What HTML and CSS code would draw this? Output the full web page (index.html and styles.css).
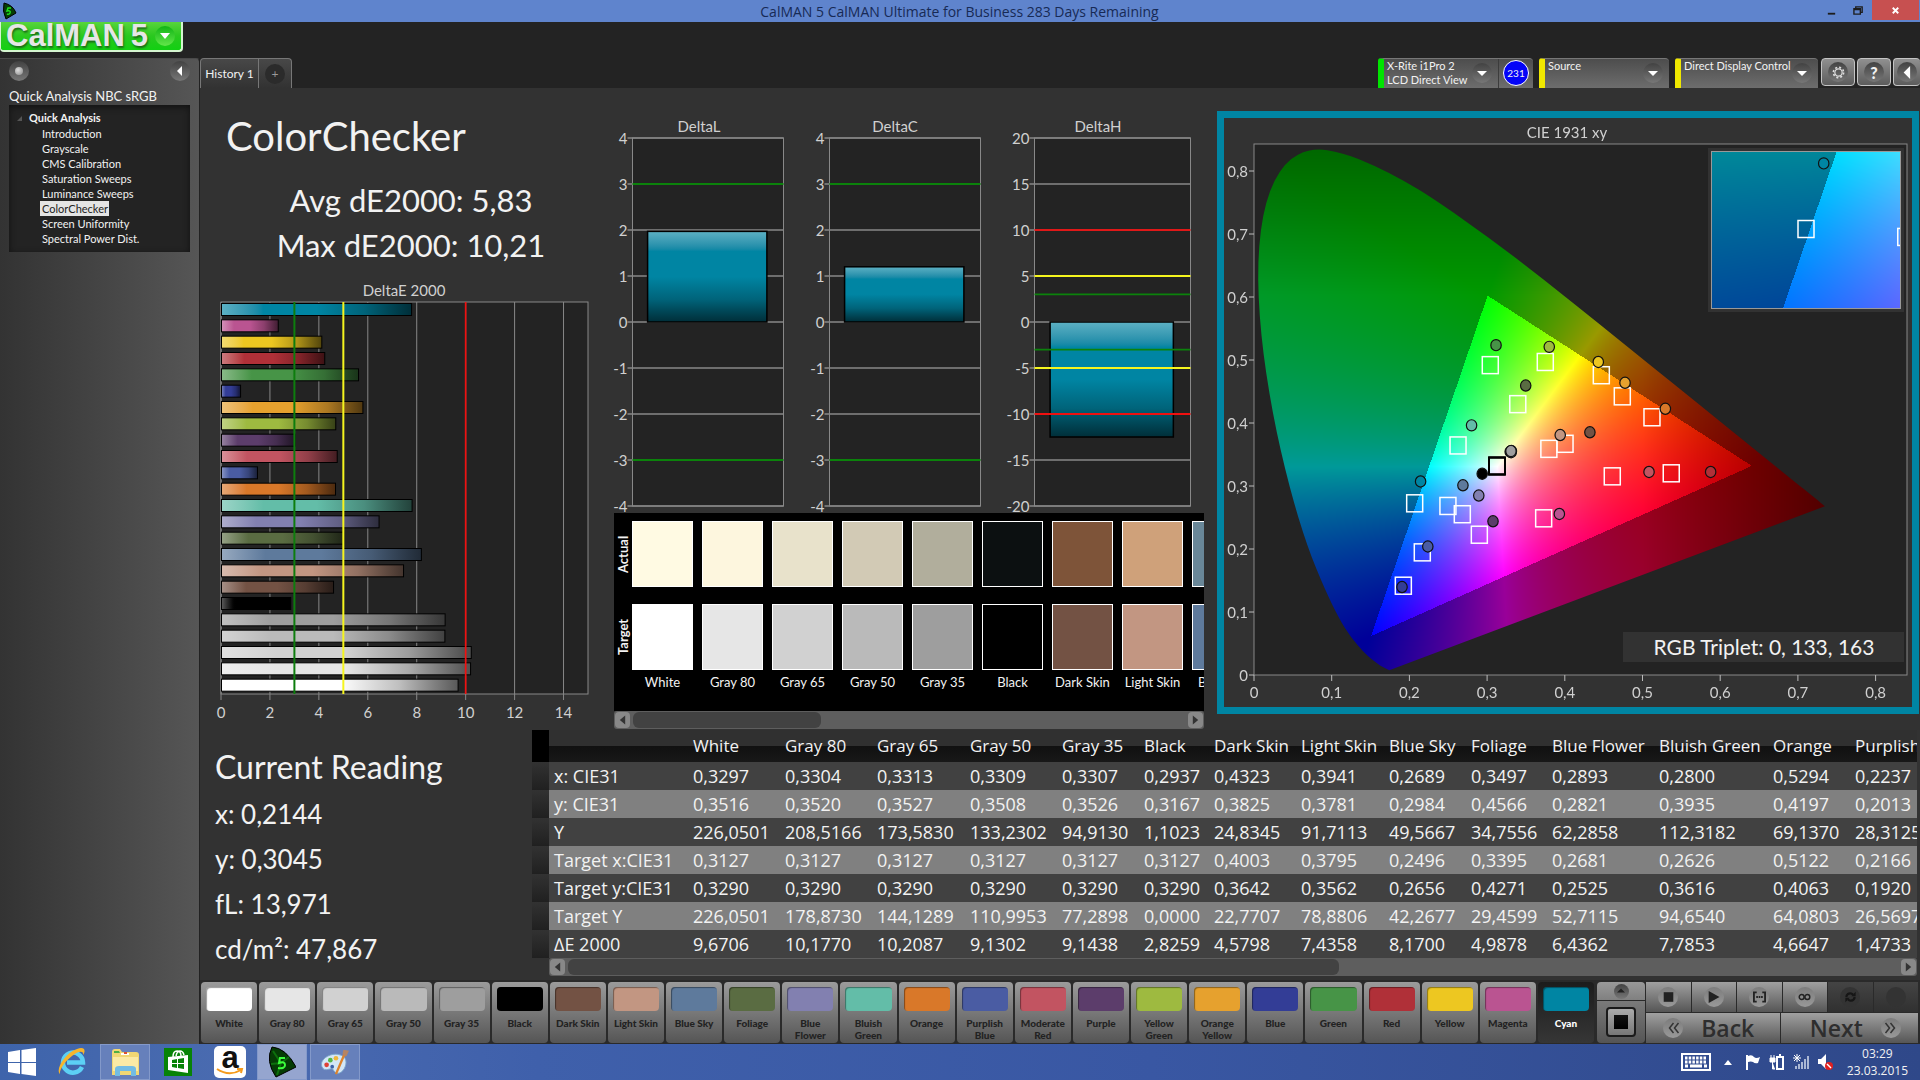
FILE: index.html
```html
<!DOCTYPE html>
<html lang="en">
<head>
  <meta charset="UTF-8" />
  <meta name="viewport" content="width=device-width, initial-scale=1.0" />
  <title>CalMAN 5 CalMAN Ultimate for Business</title>
  <link rel="stylesheet" href="styles.css">
</head>
<body>
  <!-- Window title bar -->
  <header class="titlebar">
    <svg class="app-icon" viewBox="0 0 16 18"><path d="M3 1 Q12 3 15 11 L5 17 Q1 9 3 1Z" fill="#063d06" stroke="#000"/><path d="M10 6H7L6 9Q10 8 9 11Q8 13 6 12" fill="none" stroke="#1de21d" stroke-width="1.5"/></svg>
    <h1 class="window-title">CalMAN 5 CalMAN Ultimate for Business 283 Days Remaining</h1>
    <div class="window-buttons">
      <button aria-label="Minimize"><svg viewBox="0 0 12 12"><path d="M2 9.500h8" stroke="#1d1d1d" stroke-width="2"/></svg></button>
      <button aria-label="Restore"><svg viewBox="0 0 12 12"><path d="M1 4h7v6H1zM3 4V2h7v6H8M1 5h7" fill="none" stroke="#1d1d1d" stroke-width="1.500"/></svg></button>
      <button class="close" aria-label="Close"><svg viewBox="0 0 12 12"><path d="M3 3l6 6M9 3l-6 6" stroke="#fff" stroke-width="2"/></svg></button>
    </div>
  </header>

  <div class="brand-row">
    <button class="brand"><span>CalMAN</span><span>5</span><i class="round green"><svg viewBox="0 0 10 10"><path d="M0 2h10L5 8z" fill="#fff"/></svg></i></button>
  </div>

  <div class="app">
    <!-- Workflow sidebar -->
    <aside class="sidebar">
      <div class="sidebar-top">
        <button class="round" aria-label="Record"><i class="dot"></i></button>
        <button class="round" aria-label="Collapse"><svg viewBox="0 0 10 10"><path d="M7 0v10L2 5z" fill="#fff"/></svg></button>
      </div>
      <h2>Quick Analysis NBC sRGB</h2>
      <nav class="tree">
        <strong>Quick Analysis</strong>
        <a href="#">Introduction</a>
        <a href="#">Grayscale</a>
        <a href="#">CMS Calibration</a>
        <a href="#">Saturation Sweeps</a>
        <a href="#">Luminance Sweeps</a>
        <a href="#" class="current">ColorChecker</a>
        <a href="#">Screen Uniformity</a>
        <a href="#">Spectral Power Dist.</a>
      </nav>
    </aside>

    <main class="main">
      <!-- Tabs and devices -->
      <div class="tab-row">
        <div class="tabs">
          <button class="tab">History 1</button>
          <button class="tab add" aria-label="Add history"><i>+</i></button>
        </div>
        <div class="devices">
          <div class="device meter">
            <button class="device-name">X-Rite i1Pro 2<br>LCD Direct View<i class="round"><svg viewBox="0 0 10 10"><path d="M0 3h10L5 8z" fill="#fff"/></svg></i></button>
            <button class="count"><i>231</i></button>
          </div>
          <div class="device source">
            <button class="device-name">Source<i class="round"><svg viewBox="0 0 10 10"><path d="M0 3h10L5 8z" fill="#fff"/></svg></i></button>
          </div>
          <div class="device display">
            <button class="device-name">Direct Display Control<i class="round"><svg viewBox="0 0 10 10"><path d="M0 3h10L5 8z" fill="#fff"/></svg></i></button>
          </div>
          <button class="tool" aria-label="Settings"><i class="round"><svg viewBox="0 0 16 16"><circle cx="8" cy="8" r="4.500" fill="none" stroke="#ddd" stroke-width="1.500"/><circle cx="8" cy="8" r="6.300" fill="none" stroke="#ddd" stroke-width="2" stroke-dasharray="2.500 2.450"/></svg></i></button>
          <button class="tool" aria-label="Help"><i class="round">?</i></button>
          <button class="tool" aria-label="Hide"><i class="round"><svg viewBox="0 0 10 10"><path d="M7 0v10L2 5z" fill="#fff"/></svg></i></button>
        </div>
      </div>

      <div class="workspace">
        <div class="upper">
          <section class="summary">
            <h2>ColorChecker</h2>
            <p>Avg dE2000: 5,83</p>
            <p>Max dE2000: 10,21</p>
            <svg id="delta-e" class="chart" viewBox="0 0 414 450"></svg>
          </section>

          <section class="middle">
            <svg id="deltas" class="chart" viewBox="0 0 590 400"></svg>
            <div class="patches">
              <div class="patch-sides"><span>Actual</span><span>Target</span></div>
              <div class="patch-list" id="patch-list"></div>
            </div>
            <div class="scrollbar">
              <button aria-label="Scroll left"><svg viewBox="0 0 10 10"><path d="M8 0v10L2 5z"/></svg></button>
              <div class="track"><div class="thumb short"></div></div>
              <button aria-label="Scroll right"><svg viewBox="0 0 10 10"><path d="M2 0v10L8 5z"/></svg></button>
            </div>
          </section>

          <section class="cie">
            <canvas id="cie-fill" width="688" height="589"></canvas>
            <svg id="cie-chart" class="chart" viewBox="0 0 688 589"></svg>
          </section>
        </div>

        <div class="lower">
          <section class="reading">
            <h2>Current Reading</h2>
            <p>x: 0,2144</p>
            <p>y: 0,3045</p>
            <p>fL: 13,971</p>
            <p>cd/m²: 47,867</p>
          </section>
          <section class="results">
            <div class="table-wrap"><table id="results"></table></div>
            <div class="scrollbar">
              <button aria-label="Scroll left"><svg viewBox="0 0 10 10"><path d="M8 0v10L2 5z"/></svg></button>
              <div class="track"><div class="thumb long"></div></div>
              <button aria-label="Scroll right"><svg viewBox="0 0 10 10"><path d="M2 0v10L8 5z"/></svg></button>
            </div>
          </section>
        </div>
      </div>

      <!-- Pattern buttons and transport -->
      <div class="bottom-bar">
        <div class="pattern-buttons" id="pattern-buttons"></div>
        <div class="pattern-control">
          <button aria-label="Up"><i class="round"><svg viewBox="0 0 10 10"><path d="M0 7h10L5 2z" fill="#222"/></svg></i></button>
          <button aria-label="Pattern window"><i class="pattern-window"></i></button>
        </div>
        <div class="transport">
          <div class="transport-row">
            <button aria-label="Stop"><i class="round"><svg viewBox="0 0 10 10"><path d="M1 1h8v8H1z"/></svg></i></button>
            <button aria-label="Play"><i class="round"><svg viewBox="0 0 10 10"><path d="M1 0l9 5-9 5z"/></svg></i></button>
            <button aria-label="Read series"><i class="round"><svg viewBox="0 0 14 12"><path d="M4 1H1v10h3M10 1h3v10h-3" fill="none" stroke="#222" stroke-width="2"/><path d="M3.500 6h7" stroke="#222" stroke-width="2" stroke-dasharray="1.800 .8"/></svg></i></button>
            <button aria-label="Continuous"><i class="round"><svg viewBox="0 0 16 10"><circle cx="4.500" cy="5" r="3" fill="none" stroke="#222" stroke-width="1.800"/><circle cx="11.500" cy="5" r="3" fill="none" stroke="#222" stroke-width="1.800"/></svg></i></button>
            <button class="off" aria-label="Refresh"><i class="round"><svg viewBox="0 0 14 14"><path d="M2 7Q3 2 8 3L10 4M12 7Q11 12 6 11L4 10" fill="none" stroke="#161616" stroke-width="2.500"/><path d="M8 6h5V1zM6 8H1v5z" fill="#161616"/></svg></i></button>
            <button class="off" aria-label="Blank"><i class="round"></i></button>
          </div>
          <div class="transport-row">
            <button class="nav-btn back"><i class="round"><svg viewBox="0 0 12 12"><path d="M6 1L2 6l4 5M11 1L7 6l4 5" fill="none" stroke="#333" stroke-width="1.500"/></svg></i>Back</button>
            <button class="nav-btn next">Next<i class="round"><svg viewBox="0 0 12 12"><path d="M1 1l4 5-4 5M6 1l4 5-4 5" fill="none" stroke="#333" stroke-width="1.500"/></svg></i></button>
          </div>
        </div>
      </div>
    </main>
  </div>

  <!-- Taskbar -->
  <footer class="taskbar">
    <button aria-label="Start"><svg viewBox="0 0 28 28"><path d="M0 4l12-2v12H0zM13.500 2L28 0v14H13.500zM0 15h12v11L0 24zM13.500 15H28v13l-14.500-2z" fill="#fff"/></svg></button>
    <button aria-label="Internet Explorer"><svg viewBox="0 0 28 28"><path d="M24 19A10 10 0 1 1 25 14.500H9" fill="none" stroke="#5cd0f5" stroke-width="4.500"/><path d="M2 26C-3 22 7 5 19 1c8-3 9 2 6 6 1-5-5-4-11 1C6 14 1 23 2 26z" fill="#f6b52c"/></svg></button>
    <button class="open" aria-label="File Explorer"><svg viewBox="0 0 28 28"><path d="M1 4q0-3 3-3h5l2 3h14q3 0 3 3v20H1z" fill="#f1d774"/><path d="M3 3h5l1 2H3z" fill="#4fae45"/><path d="M10 5h8v2h-8z" fill="#fff"/><path d="M13 4h3v2h-3z" fill="#dc4f32"/><path d="M2 9h25v14H2z" fill="#fbeaa5"/><path d="M4 28v-7q0-3 4-3h13q4 0 4 3v7h-5v-5H9v5z" fill="#72bce4"/></svg></button>
    <button aria-label="Store"><svg viewBox="0 0 28 28"><path d="M0 0h28v28H0z" fill="#078307"/><path d="M4 9l20-2v18L4 22z" fill="#fff"/><path d="M9 9q0-6 4-6t4 5M12 8q1-5 4-5t4 4" fill="none" stroke="#fff" stroke-width="1.500"/><path d="M8 12l5-1v4H8zM14 11l6-1v5h-6zM8 16h5v4l-5-1zM14 16h6v5l-6-1z" fill="#078307"/></svg></button>
    <button class="amazon" aria-label="Amazon"><span>a</span><svg viewBox="0 0 28 8"><path d="M1 1q12 8 24 1M21 1l5-0-1 4" fill="none" stroke="#f59b1c" stroke-width="2"/></svg></button>
    <button class="open active" aria-label="CalMAN"><svg viewBox="0 0 28 32"><path d="M4 1Q18 2 28 21L8 31Q-3 15 4 1z" fill="#053c05" stroke="#000"/><path d="M13 17L5 5M13 17l8-6M13 17L9 29M13 17L3 18" stroke="#0c700c" stroke-width="2"/><path d="M17 12h-5l-1 5q6-2 6 2t-7 3" fill="none" stroke="#3cff3c" stroke-width="2"/></svg></button>
    <button class="open" aria-label="Paint"><svg viewBox="0 0 30 28"><path d="M1 19C-2 11 10 4 19 6c9 2 9 9 6 15-4 7-10 6-12 1-2-3-9 4-12-3z" fill="#d3e7f6" stroke="#7da7cc"/><circle cx="6" cy="17" r="2.500" fill="#df4235"/><circle cx="10" cy="12" r="2.500" fill="#56b843"/><circle cx="16" cy="10" r="2.500" fill="#f0b73a"/><circle cx="12" cy="19" r="2" fill="#3c62a9"/><path d="M16 27L25 6" stroke="#dd832c" stroke-width="2.500"/><path d="M23 6l1-5 6 1-3 6z" fill="#b58463"/></svg></button>
    <div class="tray">
      <svg class="keyboard" viewBox="0 0 30 18"><path d="M1 1h28v16H1z" fill="none" stroke="#fff" stroke-width="2"/><path d="M4 5h22M4 9h22" stroke="#fff" stroke-width="3" stroke-dasharray="2.500 1.200"/><path d="M4 13h3M9 13h12M23 13h3" stroke="#fff" stroke-width="3"/></svg>
      <svg class="up" viewBox="0 0 10 10"><path d="M1 8h8L5 3z" fill="#fff"/></svg>
      <svg viewBox="0 0 16 16"><path d="M2 1v15" stroke="#fff" stroke-width="2"/><path d="M3 2q4-2 6 1 2 2 6 0l-2 6q-3 1-5-1-2-1-5 0z" fill="#fff"/></svg>
      <svg viewBox="0 0 16 16"><path d="M8 3h6v12H8zM10 1h2" fill="none" stroke="#fff" stroke-width="2"/><path d="M1 4h5v4H1zM2 1v3M5 1v3M3.500 8v7H6" fill="#fff" stroke="#fff"/></svg>
      <svg viewBox="0 0 16 16"><path d="M3 15v-3M6 15v-5M9 15V8M12 15V5M15 15V2" stroke="#aab7d4" stroke-width="2"/><path d="M4 0v8M0 4h8M1 1l6 6M7 1L1 7" stroke="#fff"/></svg>
      <svg viewBox="0 0 16 16"><path d="M1 5h3l5-5v15l-5-5H1z" fill="#fff"/><circle cx="12" cy="12" r="4" fill="#e02020"/><path d="M10 10l4 4" stroke="#fff" stroke-width="1.500"/></svg>
      <div class="clock">03:29<br>23.03.2015</div>
    </div>
  </footer>

  <script src="script.js"></script>
</body>
</html>
```
FILE: styles.css
```css
* {
  margin: 0;
  padding: 0;
  box-sizing: border-box;
}
body {
  min-height: 100vh;
  display: flex;
  flex-direction: column;
  background: #232323;
  color: #f2f2f2;
  font-family: Lato, "Liberation Sans", sans-serif;
  font-size: 12px;
  overflow-x: hidden;
}
button {
  border: none;
  background: none;
  color: inherit;
  font: inherit;
  cursor: pointer;
}
i {
  font-style: normal;
}
svg {
  display: block;
}

/* Title bar */
.titlebar {
  display: flex;
  align-items: center;
  height: 22px;
  background: #5f84cd;
  color: #172a55;
}
.app-icon {
  width: 16px;
  height: 18px;
  margin-left: 1px;
}
.window-title {
  flex: 1;
  padding-left: 84px;
  text-align: center;
  font: 14px "Open Sans", sans-serif;
}
.window-buttons {
  display: flex;
  align-self: flex-start;
}
.window-buttons button {
  display: flex;
  align-items: center;
  justify-content: center;
  width: 27px;
  height: 20px;
}
.window-buttons svg {
  width: 11px;
  height: 11px;
}
.window-buttons .close {
  width: 47px;
  margin-right: 1px;
  background: #c75050;
}

/* Brand button */
.brand-row {
  height: 36px;
}
.brand {
  display: flex;
  align-items: center;
  gap: 6px;
  width: 183px;
  height: 30px;
  padding-left: 5px;
  border: 2px solid #d5f5d0;
  border-top: none;
  border-left-width: 1px;
  border-radius: 0 0 4px 4px;
  background: linear-gradient(#58d53c, #2ac81f 50%, #12d012);
  color: #e6e6e6;
  font: bold 31px/26px "Liberation Sans", sans-serif;
  text-shadow: 1px 2px 2px #1c6d18;
}

/* Small round icon holders */
.round {
  display: flex;
  align-items: center;
  justify-content: center;
  flex: none;
  width: 20px;
  height: 20px;
  border-radius: 50%;
  background: linear-gradient(#424242, #777);
}
.round svg {
  width: 10px;
  height: 10px;
}
.round.green {
  margin-left: auto;
  margin-right: 6px;
  background: linear-gradient(#10b414, #63e64a);
}

/* Main frame */
.app {
  flex: 1;
  display: flex;
}
.sidebar {
  flex: none;
  width: 200px;
  padding: 2px 9px;
  border-top: 1px solid #4a4a4a;
  border-right: 1px solid #222;
  border-top-right-radius: 4px;
  background: linear-gradient(90deg, #333, #565656);
}
.sidebar-top {
  display: flex;
  justify-content: space-between;
  margin-bottom: 7px;
}
.dot {
  width: 8px;
  height: 8px;
  border-radius: 50%;
  background: radial-gradient(circle at 3px 3px, #ddd, #888);
}
.sidebar h2 {
  font-size: 13px;
  font-weight: normal;
  line-height: 16px;
  white-space: nowrap;
}
.tree {
  display: flex;
  flex-direction: column;
  align-items: flex-start;
  margin-top: 1px;
  padding: 5px 0 6px 31px;
  background: #232323;
  box-shadow: inset 0 2px 6px #111;
  font-size: 11px;
}
.tree strong {
  position: relative;
  margin-left: -11px;
  line-height: 16px;
  font-size: 11px;
}
.tree strong::before {
  content: "";
  position: absolute;
  left: -12px;
  top: 6px;
  border-left: 5px solid transparent;
  border-bottom: 5px solid #555;
}
.tree a {
  padding: 0 1px 0 2px;
  color: #f2f2f2;
  line-height: 15px;
  text-decoration: none;
}
.tree .current {
  background: #e4e4e4;
  color: #222;
}
.main {
  flex: 1;
  min-width: 0;
  display: flex;
  flex-direction: column;
}

/* Tabs */
.tab-row {
  display: flex;
  justify-content: space-between;
  height: 30px;
}
.tabs {
  display: flex;
  border: 1px solid #777;
  border-bottom: none;
  border-radius: 4px 4px 0 0;
  background: linear-gradient(#484848, #323232);
}
.tab {
  width: 57px;
  font-size: 12px;
  white-space: nowrap;
}
.tab.add {
  display: flex;
  align-items: center;
  justify-content: center;
  width: 33px;
  border-left: 1px solid #777;
}
.tab.add i {
  width: 20px;
  height: 20px;
  border-radius: 50%;
  background: #2b2b2b;
  color: #999;
  line-height: 20px;
}
.devices {
  display: flex;
  align-items: flex-start;
  gap: 2px;
}
.device {
  display: flex;
  height: 30px;
  margin-right: 4px;
  border-left: 6px solid #f0e800;
  border-top: 1px solid #777;
  border-radius: 3px 4px 0 0;
  background: linear-gradient(#4d4d4d, #6d6d6d);
}
.device.meter {
  width: 155px;
  border-left-color: #00e400;
}
.device.source {
  width: 130px;
}
.device.display {
  width: 143px;
  margin-right: 1px;
}
.device-name {
  position: relative;
  flex: 1;
  padding-left: 3px;
  text-align: left;
  font-size: 11px;
  line-height: 14px;
  display: flex;
  align-items: flex-start;
  white-space: nowrap;
}
.meter .device-name {
  border-right: 1px solid #3c3c3c;
}
.device-name .round {
  position: absolute;
  right: 6px;
  top: 4px;
}
.count {
  display: flex;
  align-items: center;
  justify-content: center;
  width: 34px;
  padding-bottom: 2px;
}
.count i {
  width: 26px;
  height: 26px;
  border: 1px solid #fff;
  border-radius: 50%;
  background: #0404f8;
  font-size: 10px;
  line-height: 24px;
}
.tool {
  display: flex;
  align-items: center;
  justify-content: center;
  width: 34px;
  height: 28px;
  border: 1px solid #c4c4c4;
  border-radius: 4px;
  background: linear-gradient(#909090, #5c5c5c);
  font-size: 16px;
  font-weight: 900;
}
.tool:last-child {
  width: 27px;
  border-right: none;
}
.tool .round svg {
  width: 13px;
  height: 13px;
}

/* Workspace */
.workspace {
  flex: 1;
  background: #323232;
}
.upper {
  display: grid;
  grid-template-columns: 414fr 590fr 716fr;
}
.chart {
  width: 100%;
  overflow: visible;
}
.chart text {
  fill: #d0d0d0;
  font-size: 15px;
  text-anchor: middle;
}
.chart .end {
  text-anchor: end;
}
.summary h2 {
  padding: 24px 0 0 26px;
  font-size: 40px;
  font-weight: normal;
  line-height: 48px;
}
.summary p {
  padding-left: 8px;
  text-align: center;
  font-size: 31px;
  line-height: 45px;
}
.summary h2 + p {
  margin-top: 18px;
}
.summary svg {
  margin-top: 12px;
}
.middle {
  min-width: 0;
  padding-top: 25px;
}

/* Actual / target patches */
.patches {
  position: relative;
  display: flex;
  height: 198px;
  padding-top: 8px;
  overflow: hidden;
  background: #000;
}
.patch-sides {
  display: flex;
  flex: none;
  flex-direction: column;
  gap: 17px;
  width: 18px;
}
.patch-sides span {
  height: 66px;
  line-height: 18px;
  text-align: center;
  writing-mode: vertical-rl;
  transform: rotate(180deg);
  font-size: 13px;
  font-weight: bold;
}
.patch-list {
  display: flex;
  gap: 9px;
}
.patch {
  flex: none;
  width: 61px;
  text-align: center;
  font-size: 13px;
  white-space: nowrap;
}
.patch i {
  display: block;
  height: 66px;
  margin-bottom: 17px;
  border: 1px solid #fff;
}
.patch i + i {
  margin-bottom: 4px;
}

/* Scrollbars */
.scrollbar {
  display: flex;
  align-items: center;
  gap: 3px;
  height: 18px;
  padding: 0 1px;
  border-radius: 3px;
  background: #5e5e5e;
}
.scrollbar button {
  display: flex;
  align-items: center;
  justify-content: center;
  width: 15px;
  height: 16px;
  border-radius: 4px;
  background: #888;
}
.scrollbar svg {
  width: 9px;
  height: 12px;
  fill: #333;
}
.track {
  flex: 1;
}
.thumb {
  height: 16px;
  border-radius: 6px;
  background: #424242;
}
.thumb.short {
  width: 34%;
}
.thumb.long {
  width: 58%;
}

/* CIE chart */
.cie {
  display: grid;
  align-self: start;
  margin: 23px 1px 0 13px;
  border: 7px solid #0085a3;
}
.cie canvas,
.cie svg {
  grid-area: 1 / 1;
  width: 100%;
}
.chart .triplet {
  fill: #f2f2f2;
  font-size: 21px;
}

/* Reading and results */
.lower {
  display: flex;
}
.reading {
  flex: none;
  width: 332px;
  padding: 14px 0 0 15px;
  font-size: 26px;
  line-height: 45px;
}
.reading h2 {
  margin-bottom: 3px;
  font-size: 32px;
  font-weight: normal;
}
.results {
  flex: 1;
  min-width: 0;
  margin-right: 3px;
}
.results .scrollbar {
  margin-left: 17px;
}
.table-wrap {
  overflow: hidden;
}
#results {
  width: 1404px;
  table-layout: fixed;
  border-collapse: collapse;
  font: 18px "Open Sans", "Noto Sans", sans-serif;
}
#results tr {
  height: 28px;
  background: #414141;
}
#results thead tr {
  height: 32px;
  background: linear-gradient(#303030 50%, #111 51%, #181818);
}
#results tbody tr:nth-child(even) {
  background: #808080;
}
#results th,
#results td {
  padding-left: 5px;
  text-align: left;
  font-weight: normal;
  line-height: 24px;
  white-space: nowrap;
}
#results thead th {
  font-size: 17px;
}
#results .grip {
  background: linear-gradient(#323232, #202020);
}
#results thead .grip {
  background: #000;
}

/* Bottom bar */
.bottom-bar {
  display: flex;
  height: 64px;
  padding: 2px 2px 1px 1px;
  background: #2a2a2a;
}
.pattern-buttons {
  flex: 1;
  display: flex;
  gap: 2px;
}
.pattern {
  display: flex;
  flex: 1 1 0;
  min-width: 0;
  flex-direction: column;
  align-items: center;
  padding: 5px 5px 0;
  border-radius: 4px;
  background: linear-gradient(#9b9b9b, #555);
  color: #222;
  font-size: 10px;
  font-weight: 900;
  line-height: 12px;
}
.pattern i {
  flex: none;
  width: 100%;
  height: 24px;
  margin-bottom: 6px;
  border-radius: 4px;
  box-shadow: inset 1px 1px 1px rgba(0, 0, 0, 0.4);
}
.pattern.selected {
  background: linear-gradient(#1c1c1c, #363636);
  color: #fff;
}
.pattern-control {
  display: flex;
  flex-direction: column;
  gap: 1px;
  width: 48px;
  margin: 0 1px 0 3px;
}
.pattern-control button {
  display: flex;
  align-items: center;
  justify-content: center;
  height: 18px;
  border-radius: 4px 4px 0 0;
  background: linear-gradient(#999, #808080);
}
.pattern-control button + button {
  flex: 1;
  border-radius: 0 0 4px 4px;
  background: linear-gradient(#7a7a7a, #555);
}
.pattern-control .round {
  width: 15px;
  height: 15px;
}
.pattern-control .round svg {
  width: 8px;
}
.pattern-window {
  width: 30px;
  height: 30px;
  border: 2px solid #1a1a1a;
  border-radius: 4px;
  background: linear-gradient(#111, #000) center / 14px 14px no-repeat, linear-gradient(#aaa, #777);
}
.transport {
  display: flex;
  flex-direction: column;
  gap: 1px;
  width: 272px;
}
.transport-row {
  flex: 1;
  display: flex;
  gap: 1px;
}
.transport button {
  flex: 1;
  display: flex;
  align-items: center;
  justify-content: center;
  gap: 18px;
  background: linear-gradient(#a0a0a0, #565656);
  color: #2e2e2e;
}
.transport .round {
  background: linear-gradient(#7c7c7c, #999);
}
.transport .round svg {
  width: 13px;
  height: 12px;
  fill: #222;
}
.transport .off {
  background: linear-gradient(#444, #303030);
}
.transport .off .round {
  background: #333;
}
.transport .nav-btn {
  font: 600 23px/28px "Open Sans", sans-serif;
}
.transport .back {
  padding-right: 8px;
}
.transport .next {
  padding-left: 12px;
}

/* Taskbar */
.taskbar {
  display: flex;
  height: 36px;
  background: linear-gradient(90deg, #3e64ab, #4a6bb0 12%, #3f60ab 28%, #3957a3 60%, #2f4889);
}
.taskbar button {
  display: flex;
  align-items: center;
  justify-content: center;
  width: 50px;
  margin-right: 3px;
}
.taskbar button svg {
  width: 28px;
  height: 28px;
}
.taskbar button:first-child {
  width: 44px;
}
.taskbar .open {
  border: 1px solid #8399ca;
  background: #6680bb;
}
.taskbar .active {
  background: #95a5cf;
}
.taskbar .active svg {
  height: 32px;
}
.taskbar .amazon {
  flex-direction: column;
  width: 32px;
  height: 32px;
  margin: 2px 11px 0 8px;
  border-radius: 5px;
  background: #fff;
  color: #111;
  font: bold 31px "Liberation Sans", sans-serif;
  line-height: 20px;
}
.taskbar .amazon svg {
  height: 8px;
}
.tray {
  display: flex;
  align-items: center;
  gap: 8px;
  margin-left: auto;
  padding-right: 12px;
}
.tray svg {
  width: 16px;
  height: 16px;
}
.tray .keyboard {
  width: 30px;
  height: 18px;
}
.tray .up {
  width: 10px;
  margin: 0 4px;
}
.clock {
  margin-left: 6px;
  text-align: center;
  font: 12px/17px "Open Sans", sans-serif;
}
```
FILE: script.js
```js
// name, colour, dE2000, measured x/y, target x/y
const patches = [
  ['White', '#ffffff', 9.67, .3297, .3516, .3127, .3290],
  ['Gray 80', '#e6e6e6', 10.18, .3304, .3520, .3127, .3290],
  ['Gray 65', '#d1d1d1', 10.21, .3313, .3527, .3127, .3290],
  ['Gray 50', '#bababa', 9.13, .3309, .3508, .3127, .3290],
  ['Gray 35', '#9e9e9e', 9.14, .3307, .3526, .3127, .3290],
  ['Black', '#000000', 2.83, .2937, .3167, .3127, .3290],
  ['Dark Skin', '#735244', 4.58, .4323, .3825, .4003, .3642],
  ['Light Skin', '#c29682', 7.44, .3941, .3781, .3795, .3562],
  ['Blue Sky', '#5e7a9c', 8.17, .2689, .2984, .2496, .2656],
  ['Foliage', '#5a6c42', 4.99, .3497, .4566, .3395, .4271],
  ['Blue Flower', '#8280b0', 6.44, .2893, .2821, .2681, .2525],
  ['Bluish Green', '#63bda8', 7.79, .2800, .3935, .2626, .3616],
  ['Orange', '#d97829', 4.66, .5294, .4197, .5122, .4063],
  ['Purplish Blue', '#4a5ca3', 1.47, .2237, .2013, .2166, .1920],
  ['Moderate Red', '#c25461', 4.73, .5084, .3195, .4611, .3126],
  ['Purple', '#5c3d6b', 3.0, .3076, .2413, .2900, .2200],
  ['Yellow Green', '#9eba40', 4.67, .3800, .5180, .3749, .4940],
  ['Orange Yellow', '#e6a12e', 5.78, .4775, .4610, .4740, .4395],
  ['Blue', '#333d96', .78, .1905, .1370, .1922, .1391],
  ['Green', '#479447', 5.6, .3115, .5207, .3041, .4890],
  ['Red', '#b03038', 4.22, .5877, .3195, .5370, .3174],
  ['Yellow', '#edc721', 4.1, .4431, .4940, .4470, .4730],
  ['Magenta', '#ba5491', 2.32, .3930, .2529, .3728, .2460],
  ['Cyan', '#0085a3', 7.77, .2144, .3045, .2068, .2698]
];

const actual = ['#fffae3', '#fdf6de', '#e8e2cb', '#d2cab5', '#b1ae9c', '#0c1011', '#7e5439', '#cfa17a', '#698798'];

const byId = id => document.getElementById(id);
const line = (x1, y1, x2, y2, color, w = 1) =>
  `<path d="M${x1} ${y1}L${x2} ${y2}" stroke="${color}" stroke-width="${w}"/>`;

// Bar gradients, one along x and one along y for every colour
function gradient(id, color, vertical) {
  return `<linearGradient id="${id}" x2="${vertical ? 0 : 1}" y2="${vertical ? 1 : 0}">
    <stop offset="0" stop-color="color-mix(in srgb, ${color}, #fff 36%)"/><stop offset=".22" stop-color="${color}"/>
    <stop offset=".5" stop-color="${color}"/><stop offset=".75" stop-color="color-mix(in srgb, ${color}, #000 25%)"/>
    <stop offset="1" stop-color="color-mix(in srgb, ${color}, #000 65%)"/></linearGradient>`;
}

// DeltaE 2000
function drawDeltaE() {
  const left = 21, top = 22, width = 367, height = 392, unit = width / 15;
  let out = `<text x="204" y="16">DeltaE 2000</text>
    <rect x="${left}" y="${top}" width="${width}" height="${height}" fill="#232323" stroke="#888"/>`;
  for (let v = 0; v < 15; v += 2) {
    out += line(left + v * unit, top, left + v * unit, top + height + 6, '#888');
    out += `<text x="${left + v * unit}" y="438">${v}</text>`;
  }
  [...patches].reverse().forEach((p, i) => {
    const y = top + 1.5 + i * height / 24;
    out += gradient('h' + i, p[1], false);
    out += `<rect x="${left + .5}" y="${y}" width="${p[2] * unit}" height="12" fill="url(#h${i})" stroke="#000"/>`;
  });
  out += line(left + 3 * unit, top, left + 3 * unit, top + height, '#0d7d0d', 2);
  out += line(left + 5 * unit, top, left + 5 * unit, top + height, '#f5f51e', 2);
  out += line(left + 10 * unit, top, left + 10 * unit, top + height, '#f01010', 1.7);
  byId('delta-e').innerHTML = out;
}

// DeltaL, DeltaC and DeltaH
function drawDelta(name, titleX, left, width, max, value, limits) {
  const top = 25, height = 368, step = max / 4;
  const y = v => top + height / 2 - v / max * height / 2;
  let out = `<text x="${titleX}" y="19">${name}</text>
    <rect x="${left}" y="${top}" width="${width}" height="${height}" fill="#232323" stroke="#888"/>`;
  for (let v = -max; v <= max; v += step) {
    out += line(left - 5, y(v), left + width, y(v), '#888', 1.3);
    out += `<text class="end" x="${left - 5}" y="${y(v) + 6}">${v}</text>`;
  }
  out += `<rect x="${left + width * .1}" y="${y(Math.max(value, 0))}" width="${width * .79}"
    height="${Math.abs(y(value) - y(0))}" fill="url(#cyan)" stroke="#000" stroke-width="1.5"/>`;
  limits.forEach(([v, color]) => out += line(left, y(v), left + width, y(v), color, 1.8));
  return out;
}
function drawDeltas() {
  const green = '#0b820b';
  byId('deltas').innerHTML = gradient('cyan', '#0085a3', true) +
    drawDelta('DeltaL', 85, 18.5, 151, 4, 1.97, [[3, green], [-3, green]]) +
    drawDelta('DeltaC', 281, 215.5, 151, 4, 1.2, [[3, green], [-3, green]]) +
    drawDelta('DeltaH', 484, 420.5, 156, 20, -12.5,
      [[10, '#e01818'], [5, '#f5f51e'], [3, green], [-3, green], [-5, '#f5f51e'], [-10, '#f01010']]);
}

// CIE 1931 diagram
const locus = [
  [.1741, .005], [.1644, .0109], [.1566, .0177], [.144, .0297], [.1241, .0578], [.1096, .0868], [.0913, .1327],
  [.0687, .2007], [.0454, .295], [.0235, .4127], [.0082, .5384], [.0039, .6548], [.0139, .7502], [.0389, .812],
  [.0743, .8338], [.1142, .8262], [.1547, .8059], [.1929, .7816], [.2296, .7543], [.3016, .6923], [.3731, .6245],
  [.4441, .5547], [.5125, .4866], [.5752, .4242], [.627, .3725], [.6658, .334], [.6915, .3083], [.726, .274],
  [.7347, .2653]
];
const mainView = { x: v => 30 + 777 * v, y: v => 555.4 - 630.4 * v, ix: p => (p - 30) / 777, iy: p => (555.4 - p) / 630.4 };
const zoom = 3;
const insetView = {
  x: v => 582 + 777 * zoom * (v - .2068), y: v => 111 - 630.4 * zoom * (v - .2698),
  ix: p => .2068 + (p - 582) / 777 / zoom, iy: p => .2698 + (111 - p) / 630.4 / zoom
};

function colorAt(x, y) {
  y = Math.max(y, .001);
  const X = x / y, Z = (1 - x - y) / y;
  const raw = [3.2406 * X - 1.5372 - .4986 * Z, -.9689 * X + 1.8758 + .0415 * Z, .0557 * X - .204 + 1.057 * Z];
  const inside = Math.min(...raw) >= 0;
  const rgb = raw.map(c => Math.max(c, 0));
  const peak = Math.max(...rgb);
  let level = inside ? 255 : 153;
  level *= 1 - Math.max(0, Math.min(.5, (x - .5) * 2));
  level *= 1 - Math.max(0, (y - .6) * 1.4);
  return rgb.map(c => c / peak * level);
}

function fillView(view, x0, y0, w, h) {
  const layer = document.createElement('canvas');
  layer.width = w;
  layer.height = h;
  const ctx = layer.getContext('2d');
  const image = ctx.createImageData(w, h);
  for (let j = 0; j < h; j++) {
    for (let i = 0; i < w; i++) {
      const [r, g, b] = colorAt(view.ix(x0 + i), view.iy(y0 + j));
      image.data.set([r, g, b, 255], (j * w + i) * 4);
    }
  }
  ctx.putImageData(image, 0, 0);
  return layer;
}

function drawCie() {
  const ctx = byId('cie-fill').getContext('2d');
  ctx.fillStyle = '#232323';
  ctx.fillRect(30, 26, 653, 531);
  ctx.save();
  ctx.beginPath();
  const pts = locus.map(([x, y]) => [mainView.x(x), mainView.y(y)]);
  ctx.moveTo(...pts[0]);
  for (let i = 1; i < pts.length - 1; i++) {
    ctx.quadraticCurveTo(...pts[i], (pts[i][0] + pts[i + 1][0]) / 2, (pts[i][1] + pts[i + 1][1]) / 2);
  }
  ctx.lineTo(...pts[pts.length - 1]);
  ctx.closePath();
  ctx.clip();
  ctx.drawImage(fillView(mainView, 30, 26, 653, 531), 30, 26);
  ctx.restore();
  ctx.fillStyle = '#323232';
  ctx.fillRect(484, 30, 196, 164);
  ctx.drawImage(fillView(insetView, 488, 34, 188, 156), 488, 34);

  let out = `<text x="343" y="20">CIE 1931 xy</text>
    <rect x="30" y="26" width="653" height="531" fill="none" stroke="#888"/>
    <rect x="487.5" y="33.5" width="189" height="157" fill="none" stroke="#999"/>`;
  for (let v = 0; v <= 8; v++) {
    const label = v ? '0,' + v : '0';
    const x = 30 + v * 77.7, y = 557 - v * 63;
    out += line(x, 557, x, 563, '#bbb') + `<text x="${x}" y="580">${label}</text>`;
    out += line(25, y, 30, y, '#bbb') + `<text class="end" x="24" y="${y + 6}">${label}</text>`;
  }
  const square = (x, y, color) =>
    `<rect x="${x - 8}" y="${y - 8.5}" width="16" height="17" fill="none" stroke="${color}" stroke-width="1.5"/>`;
  const dot = (x, y, color) =>
    `<ellipse cx="${x}" cy="${y}" rx="5.2" ry="5.6" fill="${color}" stroke="#111" stroke-width="1.2"/>`;
  patches.forEach((p, i) => out += square(mainView.x(p[5]), mainView.y(p[6]), i < 6 ? '#000' : '#fff'));
  patches.forEach(p => out += dot(mainView.x(p[3]), mainView.y(p[4]), p[1]));

  out += '<clipPath id="inset"><rect x="488" y="34" width="188" height="156"/></clipPath><g clip-path="url(#inset)">';
  [patches[8], patches[23]].forEach(p => {
    out += square(insetView.x(p[5]), insetView.y(p[6]), '#fff') + dot(insetView.x(p[3]), insetView.y(p[4]), p[1]);
  });
  out += '</g><rect x="399" y="514" width="281" height="30" fill="#323232"/>';
  out += '<text class="triplet" x="540" y="537">RGB Triplet: 0, 133, 163</text>';
  byId('cie-chart').innerHTML = out;
}

// Results table
const rows = [
  ['x: CIE31', '0,3297 0,3304 0,3313 0,3309 0,3307 0,2937 0,4323 0,3941 0,2689 0,3497 0,2893 0,2800 0,5294 0,2237'],
  ['y: CIE31', '0,3516 0,3520 0,3527 0,3508 0,3526 0,3167 0,3825 0,3781 0,2984 0,4566 0,2821 0,3935 0,4197 0,2013'],
  ['Y', '226,0501 208,5166 173,5830 133,2302 94,9130 1,1023 24,8345 91,7113 49,5667 34,7556 62,2858 112,3182 69,1370 28,3125'],
  ['Target x:CIE31', '0,3127 0,3127 0,3127 0,3127 0,3127 0,3127 0,4003 0,3795 0,2496 0,3395 0,2681 0,2626 0,5122 0,2166'],
  ['Target y:CIE31', '0,3290 0,3290 0,3290 0,3290 0,3290 0,3290 0,3642 0,3562 0,2656 0,4271 0,2525 0,3616 0,4063 0,1920'],
  ['Target Y', '226,0501 178,8730 144,1289 110,9953 77,2898 0,0000 22,7707 78,8806 42,2677 29,4599 52,7115 94,6540 64,0803 26,5697'],
  ['ΔE 2000', '9,6706 10,1770 10,2087 9,1302 9,1438 2,8259 4,5798 7,4358 8,1700 4,9878 6,4362 7,7853 4,6647 1,4733']
];
const columns = [17, 139, 92, 92, 93, 92, 82, 70, 87, 88, 82, 81, 107, 114, 82, 86];
byId('results').innerHTML =
  '<colgroup>' + columns.map(w => `<col width="${w}">`).join('') + '</colgroup>' +
  '<thead><tr><th class="grip"></th><th></th>' +
  patches.slice(0, 14).map(p => `<th scope="col">${p[0]}</th>`).join('') + '</tr></thead><tbody>' +
  rows.map(([name, values]) => `<tr><td class="grip"></td><th scope="row">${name}</th>` +
    values.split(' ').map(v => `<td>${v}</td>`).join('') + '</tr>').join('') + '</tbody>';

// Patches and pattern buttons
byId('patch-list').innerHTML = actual.map((color, i) =>
  `<div class="patch"><i style="background:${color}"></i><i style="background:${patches[i][1]}"></i>${patches[i][0]}</div>`).join('');
byId('pattern-buttons').innerHTML = patches.map(p =>
  `<button class="pattern${p[0] === 'Cyan' ? ' selected' : ''}"><i style="background:${p[1]}"></i>${p[0]}</button>`).join('');

drawDeltaE();
drawDeltas();
drawCie();
```
